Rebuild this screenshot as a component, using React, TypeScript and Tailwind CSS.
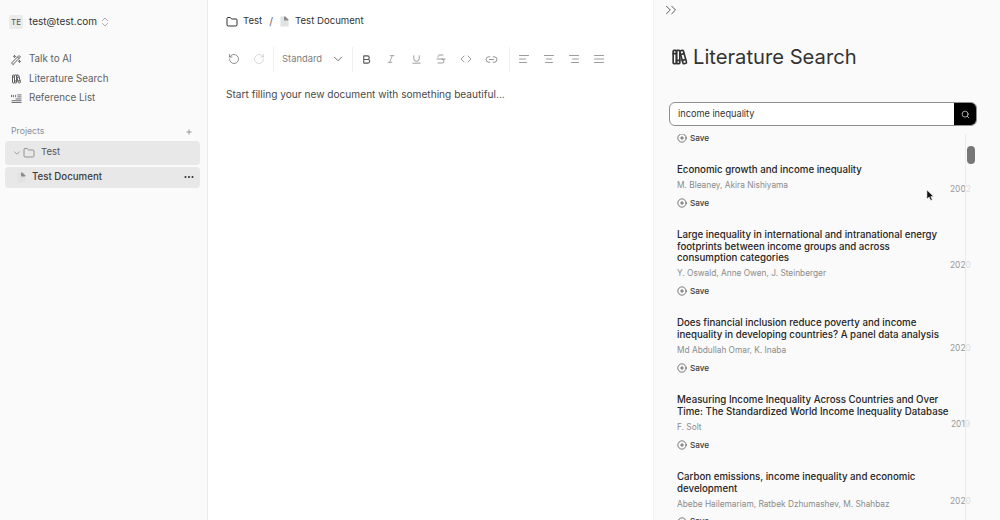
import { AlignCenter, AlignJustify, AlignLeft, AlignRight, Bold, ChevronDown, ChevronsRight, ChevronsUpDown, CirclePlus, Code, Ellipsis, Folder, Italic, Link2, Plus, RotateCcw, RotateCw, Search, Strikethrough, Underline } from "lucide-react";
import { TbBooks, TbWand } from "react-icons/tb";

function DocIcon({ className }: { className?: string }) {
  return (
    <svg viewBox="0 0 10 12" className={className}>
      <path d="M0.5 0.5H6L9.5 4V11.5H0.5Z" fill="#e2e2e2" />
      <path d="M4.5 0.5H6L9 3.5V5H4.5Z" fill="#8a8a8a" />
    </svg>
  );
}

function RefIcon() {
  return (
    <svg viewBox="0 0 12 10" className="w-[11px] h-[9px] text-[#6b6b6b]" fill="none" stroke="currentColor" strokeWidth="1.1">
      <path d="M0.5 1V3.5M2.5 1V3.5M5 1V3.5M7 1H11.5M7 3.2H11.5M5 5.5H11.5M0.5 7.5H11.5M0.5 9.5H11.5" />
    </svg>
  );
}

function Nav({ icon, label }: { icon: React.ReactNode; label: string }) {
  return (
    <div className="h-[19.5px] pl-[10px] flex items-center gap-[7px] text-[9.8px] text-[#5f5f5f]">
      <span className="w-[12px] flex justify-center">{icon}</span>
      {label}
    </div>
  );
}

function Divider() {
  return <div className="w-px h-[25px] bg-[#f0f0f0]" />;
}

function Slot({ children }: { children: React.ReactNode }) {
  return <div className="w-[25px] shrink-0 flex items-center justify-center">{children}</div>;
}

function SaveRow() {
  return (
    <div className="h-[12px] flex items-center gap-[3px] text-[8.2px] font-medium text-[#3a3a3a]">
      <CirclePlus className="w-[10px] h-[10px]" strokeWidth={1.6} />
      Save
    </div>
  );
}

function Paper({ title, authors, year, yearClass }: { title: string[]; authors: string; year: string; yearClass?: string }) {
  return (
    <div className="relative pb-[20px]">
      <div className="text-[9.7px] leading-[11.7px] font-medium text-[#262626] whitespace-nowrap">
        {title.map((t) => <div key={t}>{t}</div>)}
      </div>
      <div className="mt-[3.3px] text-[8.3px] leading-[12px] text-[#8b8b8b]">{authors}</div>
      <div className="mt-[6px]"><SaveRow /></div>
      <div className={`absolute text-[8.4px] leading-[12px] text-[#999] ${yearClass ?? "left-[273px]"}`} style={{ top: "calc(50% - 8px)", transform: "translateY(-50%)" }}>{year}</div>
    </div>
  );
}

export default function App() {
  return (
    <div className="relative flex w-[1000px] h-[520px] overflow-hidden bg-white text-[#2b2b2b]" style={{ fontFamily: "Inter, 'Liberation Sans', sans-serif" }}>
      <aside className="w-[208px] shrink-0 h-full bg-[#fafafa] border-r border-[#ececec] flex flex-col">
        <div className="mt-[14px] ml-[9px] flex items-center h-[15px]">
          <div className="w-[14px] h-[14px] rounded-[2px] bg-[#ebebeb] flex items-center justify-center text-[8px] text-[#555]">TE</div>
          <span className="ml-[6px] text-[10px] text-[#333]">test@test.com</span>
          <ChevronsUpDown className="ml-[2px] w-[12px] h-[12px] text-[#777]" strokeWidth={1.2} />
        </div>
        <nav className="mt-[21px] flex flex-col">
          <Nav icon={<TbWand className="w-[12px] h-[12px]" />} label="Talk to AI" />
          <Nav icon={<TbBooks className="w-[12px] h-[12px]" />} label="Literature Search" />
          <Nav icon={<RefIcon />} label="Reference List" />
        </nav>
        <div className="mt-[16px] pl-[11px] pr-[14px] flex items-center justify-between text-[8.7px] text-[#8a8f96] h-[14px]">
          Projects
          <Plus className="w-[8px] h-[8px] text-[#555]" strokeWidth={1.6} />
        </div>
        <div className="mt-[2px] ml-[5px] mr-[7px] h-[24px] rounded-[4px] bg-[#e8e8e8] flex items-center pl-[7px] text-[9.5px] text-[#555]">
          <ChevronDown className="w-[10px] h-[10px] text-[#666]" strokeWidth={1.4} />
          <Folder className="ml-[1px] w-[12px] h-[12px] text-[#666]" strokeWidth={1.3} />
          <span className="ml-[6px]">Test</span>
        </div>
        <div className="mt-[2px] ml-[5px] mr-[7px] h-[21px] rounded-[4px] bg-[#e8e8e8] flex items-center pl-[12px] pr-[5px] text-[9.7px] font-medium text-[#3d3d3d]">
          <DocIcon className="w-[9px] h-[11px]" />
          <span className="ml-[6px] flex-1">Test Document</span>
          <Ellipsis className="w-[12px] h-[12px] text-[#333]" strokeWidth={2.2} />
        </div>
      </aside>

      <main className="w-[445px] shrink-0 h-full bg-white pl-[18px]">
        <div className="mt-[15px] h-[13px] flex items-center text-[9.6px] text-[#333]">
          <Folder className="w-[12px] h-[12px] text-[#222]" strokeWidth={1.9} />
          <span className="ml-[5px]">Test</span>
          <span className="ml-[7px] text-[#666] text-[10.5px]">/</span>
          <DocIcon className="ml-[7px] w-[9px] h-[11px]" />
          <span className="ml-[6px]">Test Document</span>
        </div>
        <div className="mt-[18px] -ml-[5px] h-[26px] flex items-center text-[#555]">
          <Slot><RotateCcw className="w-[12px] h-[12px]" strokeWidth={1.3} /></Slot>
          <Slot><RotateCw className="w-[12px] h-[12px] text-[#c4c4c4]" strokeWidth={1.3} /></Slot>
          <div className="ml-[2px]"><Divider /></div>
          <span className="ml-[8px] w-[41px] text-[9.4px] text-[#808080] whitespace-nowrap">Standard</span>
          <ChevronDown className="ml-[8px] w-[14px] h-[14px] text-[#444]" strokeWidth={1.3} />
          <div className="ml-[7px]"><Divider /></div>
          <div className="ml-[0.5px]"><Slot><Bold className="w-[11px] h-[11px] text-[#555]" strokeWidth={2.4} /></Slot></div>
          <Slot><Italic className="w-[10px] h-[10px] text-[#777]" strokeWidth={1.5} /></Slot>
          <Slot><Underline className="w-[11px] h-[11px] text-[#666]" strokeWidth={1.4} /></Slot>
          <Slot><Strikethrough className="w-[12px] h-[12px] text-[#666]" strokeWidth={1.3} /></Slot>
          <Slot><Code className="w-[12px] h-[12px] text-[#666]" strokeWidth={1.3} /></Slot>
          <Slot><Link2 className="w-[13px] h-[13px] text-[#666]" strokeWidth={1.3} /></Slot>
          <div className="ml-[5.5px]"><Divider /></div>
          <div className="ml-[1.5px]"><Slot><AlignLeft className="w-[12px] h-[12px] text-[#666]" strokeWidth={1.3} /></Slot></div>
          <Slot><AlignCenter className="w-[12px] h-[12px] text-[#666]" strokeWidth={1.3} /></Slot>
          <Slot><AlignRight className="w-[12px] h-[12px] text-[#666]" strokeWidth={1.3} /></Slot>
          <Slot><AlignJustify className="w-[12px] h-[12px] text-[#666]" strokeWidth={1.3} /></Slot>
        </div>
        <p className="mt-[16px] text-[10.13px] leading-[13px] text-[#4a4a4a]">Start filling your new document with something beautiful...</p>
      </main>

      <section className="relative flex-1 h-full bg-[#fafafa] border-l border-[#f3f3f3] flex flex-col">
        <ChevronsRight className="ml-[7.5px] mt-[1px] w-[18px] h-[18px] text-[#555]" strokeWidth={1.3} />
        <div className="mt-[24px] ml-[15px] flex items-center h-[28px]">
          <TbBooks className="w-[20px] h-[20px] text-[#333]" />
          <h1 className="ml-[4px] text-[20.2px] font-normal text-[#333]">Literature Search</h1>
        </div>
        <div className="mt-[31px] ml-[15px] w-[308px] h-[24px] flex rounded-[6px] border border-[#8f8f8f] bg-white overflow-hidden shrink-0">
          <div className="flex-1 pl-[8px] flex items-center text-[9.2px] text-[#333]">income inequality</div>
          <div className="w-[22px] bg-black flex items-center justify-center">
            <Search className="w-[9px] h-[9px] text-[#ddd]" strokeWidth={2} />
          </div>
        </div>
        <div className="relative mt-[8px] flex-1 overflow-hidden pl-[23px]">
          <div className="-mt-[2px]"><SaveRow /></div>
          <div className="mt-[20px]">
            <Paper title={["Economic growth and income inequality"]} authors="M. Bleaney, Akira Nishiyama" year="2002" />
            <Paper title={["Large inequality in international and intranational energy", "footprints between income groups and across", "consumption categories"]} authors="Y. Oswald, Anne Owen, J. Steinberger" year="2020" />
            <Paper title={["Does financial inclusion reduce poverty and income", "inequality in developing countries? A panel data analysis"]} authors="Md Abdullah Omar, K. Inaba" year="2020" />
            <Paper title={["Measuring Income Inequality Across Countries and Over", "Time: The Standardized World Income Inequality Database"]} authors="F. Solt" year="2019" yearClass="left-[274px]" />
            <Paper title={["Carbon emissions, income inequality and economic", "development"]} authors="Abebe Hailemariam, Ratbek Dzhumashev, M. Shahbaz" year="2020" />
          </div>
          <div className="absolute left-[311px] top-0 bottom-0 w-[12px] bg-[#fafafa]/70 border-l border-[#ececec]">
            <div className="absolute left-[1px] top-[12px] w-[8px] h-[18px] rounded-[4px] bg-[#777]" />
          </div>
        </div>
      </section>

      <svg viewBox="0 0 10 14" className="absolute left-[926px] top-[189px] w-[9px] h-[13px]">
        <path d="M1 1V11L3.5 8.8L5.2 12.5L7 11.7L5.3 8.2H8.5Z" fill="#111" stroke="#fff" strokeWidth="0.6" />
      </svg>
    </div>
  );
}
